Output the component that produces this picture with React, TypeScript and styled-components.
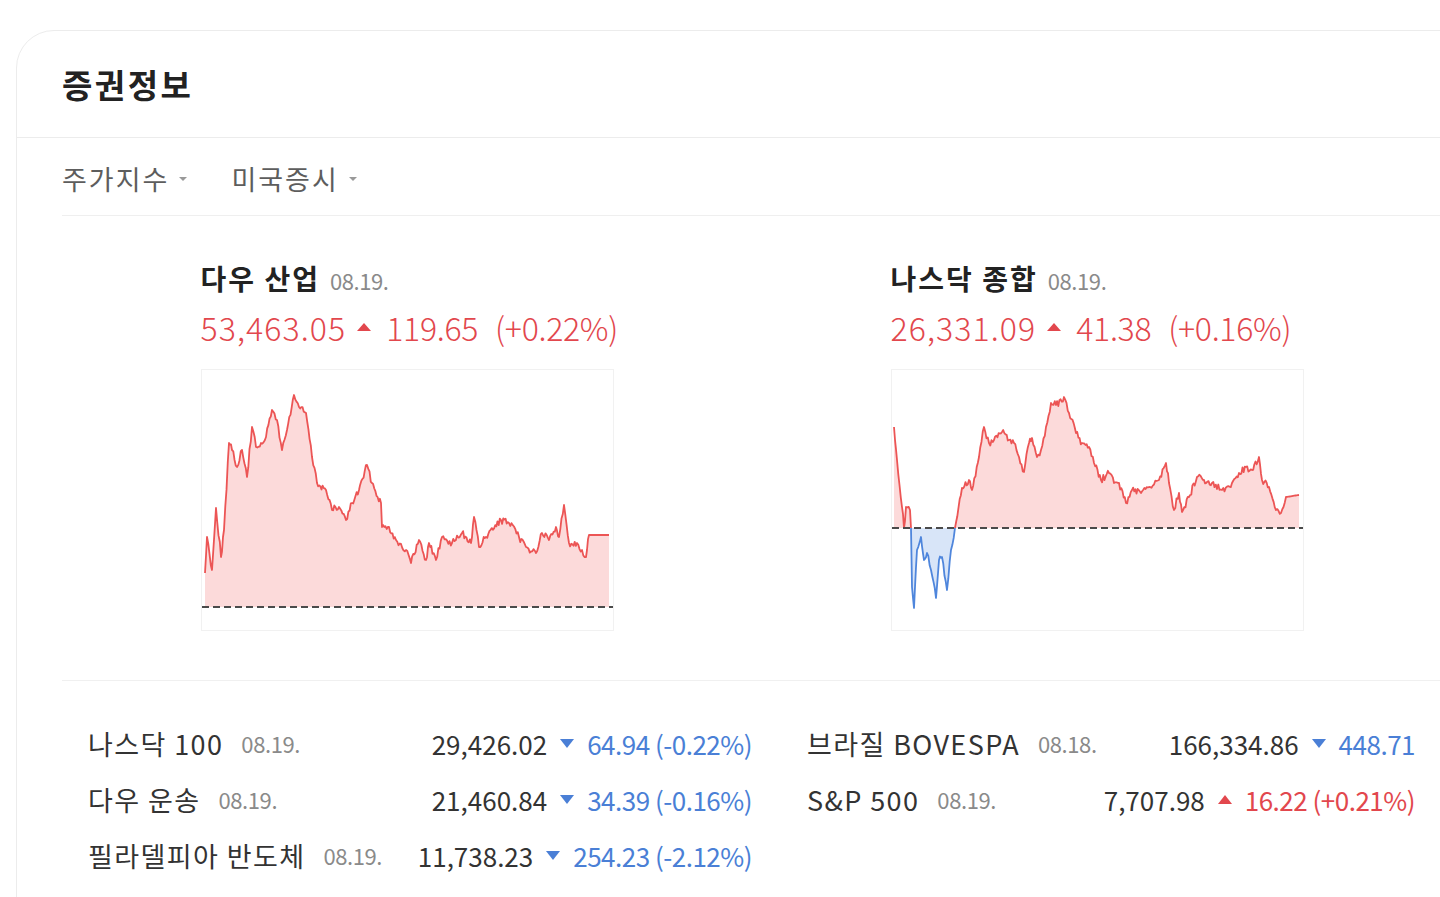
import styled, { createGlobalStyle } from "styled-components";
import * as React from "react";

const GlobalStyle = createGlobalStyle`
    html, body {
        margin: 0;
        padding: 0;
        background: #fff;
        overflow: hidden;
    }
    body {
        font-family: "Noto Sans CJK KR", "Noto Sans", sans-serif;
        color: #222;
    }
`;

const RED = "#e2474d";
const BLUE = "#4a7fd6";

const Page = styled.div`
    padding: 30px 0 0 16px;
    width: 1440px;
    height: 897px;
    box-sizing: border-box;
    overflow: hidden;
`;

const Card = styled.section`
    width: 1472px;
    min-height: 1000px;
    border: 1px solid #ececec;
    border-radius: 38px;
    box-sizing: border-box;
    background: #fff;
`;

const Header = styled.header`
    height: 106px;
    display: flex;
    align-items: center;
    padding: 0 45px;
    border-bottom: 1px solid #ececec;
`;

const Title = styled.h2`
    margin: 0;
    font-size: 33px;
    font-weight: 700;
    letter-spacing: 2.5px;
    color: #222;
`;

const Body = styled.div`
    padding-left: 45px;
`;

const Tabs = styled.nav`
    height: 78px;
    box-sizing: border-box;
    padding-top: 4px;
    display: flex;
    align-items: center;
    gap: 44px;
    border-bottom: 1px solid #efefef;
`;

const Tab = styled.button`
    display: flex;
    align-items: center;
    gap: 10px;
    padding: 0;
    border: none;
    background: none;
    font-family: inherit;
    font-size: 27px;
    letter-spacing: 2px;
    color: #5d5d5d;
    cursor: pointer;
`;

const Caret = styled.span`
    width: 0;
    height: 0;
    border-left: 4px solid transparent;
    border-right: 4px solid transparent;
    border-top: 4px solid #999;
`;

const Charts = styled.div`
    display: grid;
    grid-template-columns: 690px 690px;
    padding: 44px 0 49px;
    border-bottom: 1px solid #f0f0f0;
`;

const ChartBlock = styled.div`
    justify-self: center;
    width: 413px;
    display: flex;
    flex-direction: column;
`;

const ChartHead = styled.div`
    display: flex;
    align-items: baseline;
    gap: 10px;
    height: 36px;
    line-height: 36px;
`;

const ChartName = styled.span`
    font-size: 28px;
    font-weight: 700;
    letter-spacing: 2px;
    color: #222;
`;

const DateText = styled.span<{ $size?: number }>`
    font-size: ${(p) => p.$size ?? 22}px;
    color: #8a8a8a;
    letter-spacing: -0.4px;
`;

const PriceLine = styled.div`
    display: flex;
    align-items: center;
    height: 40px;
    margin: 11px 0 22px;
    font-size: 32px;
    font-weight: 300;
    color: ${RED};
    letter-spacing: -0.3px;
`;

const Arrow = styled.span<{ $up: boolean; $w: number; $h: number }>`
    display: inline-block;
    width: 0;
    height: 0;
    border-left: ${(p) => p.$w / 2}px solid transparent;
    border-right: ${(p) => p.$w / 2}px solid transparent;
    ${(p) =>
        p.$up
            ? `border-bottom: ${p.$h}px solid ${RED};`
            : `border-top: ${p.$h}px solid ${BLUE};`}
`;

const PriceValue = styled.span`
    margin-right: 11px;
    letter-spacing: 1.1px;
`;

const PriceChange = styled.span`
    margin-left: 15px;
    margin-right: 17px;
`;

const ChartBox = styled.div`
    width: 413px;
    height: 262px;
    box-sizing: border-box;
    border: 1px solid #f1f1f1;
`;

const List = styled.div`
    display: grid;
    grid-template-columns: 664px 608px;
    column-gap: 55px;
    padding: 34px 0 0 26px;
`;

const Column = styled.div`
    display: flex;
    flex-direction: column;
`;

const Row = styled.div`
    display: flex;
    align-items: center;
    height: 56px;
    font-size: 26px;
    color: #333;
    white-space: nowrap;
`;

const RowName = styled.span`
    margin-right: 18px;
    font-size: 27px;
    letter-spacing: 1.4px;
`;

const RowValues = styled.span<{ $up: boolean }>`
    margin-left: auto;
    display: flex;
    align-items: center;
    gap: 13px;
    & > em {
        font-style: normal;
        letter-spacing: -0.5px;
        color: ${(p) => (p.$up ? RED : BLUE)};
    }
`;

type Pt = [number, number];

// 키 포인트 사이를 보간하고 약간의 잡음을 넣어 틱 차트처럼 보이게 한다
function buildSeries(keys: Pt[], seed: number, amp: number): Pt[] {
    let s = seed;
    const rand = () => {
        s = (s * 1103515245 + 12345) % 2147483648;
        return s / 2147483648;
    };
    const out: Pt[] = [keys[0]];
    for (let i = 1; i < keys.length; i++) {
        const [x0, y0] = keys[i - 1];
        const [x1, y1] = keys[i];
        const steps = Math.max(1, Math.round((x1 - x0) / 1.2));
        const flat = i === keys.length - 1;
        for (let k = 1; k <= steps; k++) {
            const t = k / steps;
            const x = x0 + (x1 - x0) * t;
            let y = y0 + (y1 - y0) * t;
            if (!flat && k < steps) y += (rand() - 0.5) * 2 * amp;
            out.push([x, y]);
        }
    }
    return out;
}

const toPath = (pts: Pt[]) =>
    pts.map(([x, y], i) => `${i ? "L" : "M"}${x.toFixed(1)} ${y.toFixed(1)}`).join(" ");

function MiniChart({ id, keys, base, seed }: { id: string; keys: Pt[]; base: number; seed: number }) {
    const pts = React.useMemo(() => buildSeries(keys, seed, 3.5), [keys, seed]);
    const line = toPath(pts);
    const area = `${line} L${pts[pts.length - 1][0]} ${base} L${pts[0][0]} ${base} Z`;
    return (
        <ChartBox>
            <svg width="411" height="260" viewBox="0 0 411 260">
                <defs>
                    <clipPath id={`${id}-up`}>
                        <rect x="0" y="0" width="411" height={base} />
                    </clipPath>
                    <clipPath id={`${id}-dn`}>
                        <rect x="0" y={base} width="411" height={260 - base} />
                    </clipPath>
                </defs>
                <path d={area} fill="#fcdada" clipPath={`url(#${id}-up)`} />
                <path d={area} fill="#d8e5f8" clipPath={`url(#${id}-dn)`} />
                <path d={line} fill="none" stroke="#ec5555" strokeWidth="1.8" strokeLinejoin="round" clipPath={`url(#${id}-up)`} />
                <path d={line} fill="none" stroke="#4f86dc" strokeWidth="1.8" strokeLinejoin="round" clipPath={`url(#${id}-dn)`} />
                <line x1="0" x2="411" y1={base} y2={base} stroke="#4a4a4a" strokeWidth="2" strokeDasharray="7 4" />
            </svg>
        </ChartBox>
    );
}

const dowKeys: Pt[] = [
    [3, 203], [5, 167], [10, 200], [14, 138], [19, 187], [22, 160], [27, 73], [30, 80], [35, 97],
    [40, 80], [45, 107], [50, 57], [54, 77], [59, 73], [64, 67], [70, 40], [75, 50], [80, 80],
    [85, 60], [92, 25], [97, 37], [104, 43], [110, 87], [115, 113], [124, 120], [130, 140],
    [137, 137], [144, 150], [150, 133], [157, 120], [165, 95], [170, 113], [179, 133], [180, 157],
    [187, 157], [194, 170], [204, 180], [209, 193], [217, 170], [224, 190], [227, 173], [234, 190],
    [240, 167], [250, 173], [260, 163], [269, 173], [272, 147], [277, 177], [284, 167], [299, 150],
    [307, 153], [317, 167], [324, 177], [334, 183], [340, 163], [347, 170], [354, 157], [357, 167],
    [362, 135], [367, 173], [375, 173], [380, 180], [384, 187], [387, 165], [407, 165],
];

const nasdaqKeys: Pt[] = [
    [2, 57], [5, 90], [10, 137], [12, 158], [14, 137], [18, 140], [19, 158], [20, 217], [22, 238],
    [25, 180], [29, 167], [32, 190], [35, 183], [39, 200], [44, 228], [47, 190], [50, 187],
    [55, 220], [59, 180], [63, 158], [70, 118], [77, 110], [80, 120], [87, 87], [92, 57], [97, 73],
    [102, 70], [110, 62], [117, 70], [122, 73], [127, 87], [132, 102], [137, 73], [140, 68],
    [145, 87], [149, 80], [154, 57], [159, 33], [164, 35], [172, 27], [177, 43], [184, 63],
    [190, 73], [197, 77], [202, 93], [209, 110], [217, 103], [222, 113], [227, 113], [234, 133],
    [240, 120], [249, 123], [257, 117], [267, 110], [274, 93], [277, 113], [282, 140], [287, 123],
    [290, 142], [297, 127], [305, 107], [312, 110], [320, 113], [330, 120], [340, 113], [347, 103],
    [354, 97], [360, 100], [367, 87], [370, 110], [377, 117], [384, 140], [389, 143], [394, 127],
    [407, 125],
];

const charts = [
    { id: "dow", name: "다우 산업", date: "08.19.", price: "53,463.05", change: "119.65", pct: "(+0.22%)", keys: dowKeys, base: 237, seed: 7 },
    { id: "nasdaq", name: "나스닥 종합", date: "08.19.", price: "26,331.09", change: "41.38", pct: "(+0.16%)", keys: nasdaqKeys, base: 158, seed: 19 },
];

type Quote = { name: string; date: string; value: string; change: string; up: boolean };

const leftQuotes: Quote[] = [
    { name: "나스닥 100", date: "08.19.", value: "29,426.02", change: "64.94 (-0.22%)", up: false },
    { name: "다우 운송", date: "08.19.", value: "21,460.84", change: "34.39 (-0.16%)", up: false },
    { name: "필라델피아 반도체", date: "08.19.", value: "11,738.23", change: "254.23 (-2.12%)", up: false },
];

const rightQuotes: Quote[] = [
    { name: "브라질 BOVESPA", date: "08.18.", value: "166,334.86", change: "448.71", up: false },
    { name: "S&P 500", date: "08.19.", value: "7,707.98", change: "16.22 (+0.21%)", up: true },
];

function QuoteRow({ q }: { q: Quote }) {
    return (
        <Row>
            <RowName>{q.name}</RowName>
            <DateText>{q.date}</DateText>
            <RowValues $up={q.up}>
                <span>{q.value}</span>
                <Arrow $up={q.up} $w={14} $h={9} />
                <em>{q.change}</em>
            </RowValues>
        </Row>
    );
}

export default function App() {
    return (
        <>
            <GlobalStyle />
            <Page>
                <Card>
                    <Header>
                        <Title>증권정보</Title>
                    </Header>
                    <Body>
                        <Tabs>
                            <Tab>주가지수<Caret /></Tab>
                            <Tab>미국증시<Caret /></Tab>
                        </Tabs>
                        <Charts>
                            {charts.map((c) => (
                                <ChartBlock key={c.id}>
                                    <ChartHead>
                                        <ChartName>{c.name}</ChartName>
                                        <DateText>{c.date}</DateText>
                                    </ChartHead>
                                    <PriceLine>
                                        <PriceValue>{c.price}</PriceValue>
                                        <Arrow $up $w={14} $h={8} />
                                        <PriceChange>{c.change}</PriceChange>
                                        <span>{c.pct}</span>
                                    </PriceLine>
                                    <MiniChart id={c.id} keys={c.keys} base={c.base} seed={c.seed} />
                                </ChartBlock>
                            ))}
                        </Charts>
                        <List>
                            <Column>
                                {leftQuotes.map((q) => <QuoteRow key={q.name} q={q} />)}
                            </Column>
                            <Column>
                                {rightQuotes.map((q) => <QuoteRow key={q.name} q={q} />)}
                            </Column>
                        </List>
                    </Body>
                </Card>
            </Page>
        </>
    );
}
